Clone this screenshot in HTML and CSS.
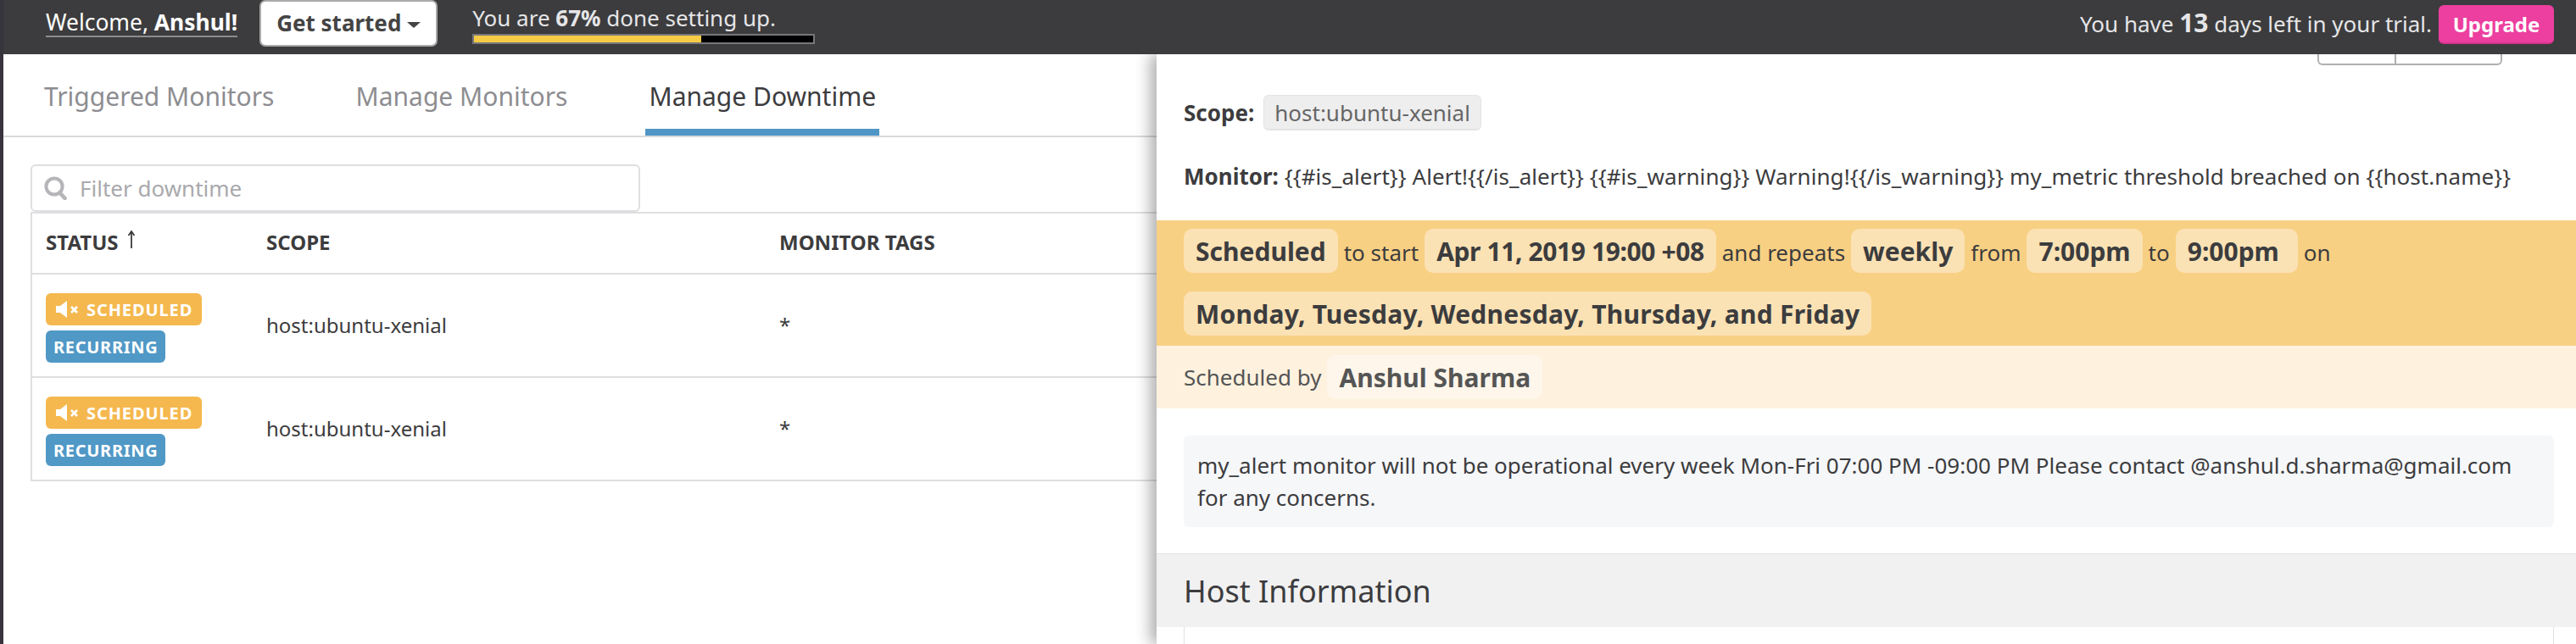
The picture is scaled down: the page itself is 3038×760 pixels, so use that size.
FILE: index.html
```html
<!DOCTYPE html>
<html lang="en">

<head>
    <meta charset="UTF-8">
    <title>Manage Downtime</title>
    <link rel="stylesheet" href="styles.css">
</head>

<body>
    <div class="topbar">
        <div class="topLeft">
            <a class="welcome">Welcome, <b>Anshul!</b></a>
            <button class="startBtn">Get started <span class="caret"></span></button>
            <div class="setup">
                <div class="setupText">You are <b>67%</b> done setting up.</div>
                <div class="progress"><div class="progressFill"></div></div>
            </div>
        </div>
        <div class="topRight">
            <span class="trial">You have <b>13</b> days left in your trial.</span>
            <button class="upgrade">Upgrade</button>
        </div>
    </div>

    <div class="page">
        <div class="tabs">
            <a class="tab">Triggered Monitors</a>
            <a class="tab">Manage Monitors</a>
            <a class="tab active">Manage Downtime</a>
        </div>

        <div class="filter">
            <svg class="searchIcon" viewBox="0 0 27 28" width="27" height="28">
                <circle cx="12" cy="12" r="9.6" fill="none" stroke="#b5b5b9" stroke-width="4" />
                <path d="M18.5 19.5 L24.5 26" fill="none" stroke="#b5b5b9" stroke-width="4.6" stroke-linecap="round" />
            </svg>
            <span>Filter downtime</span>
        </div>

        <div class="table">
            <div class="row head">
                <div class="colStatus">
                    <span>STATUS</span>
                    <svg class="sortArrow" viewBox="0 0 10 22" width="10" height="22">
                        <path d="M5 1 V21 M1.5 6 L5 1 L8.5 6" fill="none" stroke="#3c3c3e" stroke-width="1.8" />
                    </svg>
                </div>
                <div class="colScope">SCOPE</div>
                <div class="colTags">MONITOR TAGS</div>
            </div>
            <div class="row">
                <div class="colStatus">
                    <span class="badge scheduled">
                        <svg viewBox="0 0 26 20" width="26" height="20">
                            <path d="M0 6 H5 L13 0 V20 L5 14 H0 Z" fill="#fff" />
                            <path d="M18 7 L25 14 M25 7 L18 14" stroke="#fff" stroke-width="2.8" fill="none" />
                        </svg>
                        SCHEDULED
                    </span>
                    <span class="badge recurring">RECURRING</span>
                </div>
                <div class="colScope">host:ubuntu-xenial</div>
                <div class="colTags">*</div>
            </div>
            <div class="row">
                <div class="colStatus">
                    <span class="badge scheduled">
                        <svg viewBox="0 0 26 20" width="26" height="20">
                            <path d="M0 6 H5 L13 0 V20 L5 14 H0 Z" fill="#fff" />
                            <path d="M18 7 L25 14 M25 7 L18 14" stroke="#fff" stroke-width="2.8" fill="none" />
                        </svg>
                        SCHEDULED
                    </span>
                    <span class="badge recurring">RECURRING</span>
                </div>
                <div class="colScope">host:ubuntu-xenial</div>
                <div class="colTags">*</div>
            </div>
        </div>
    </div>

    <div class="panel">
        <div class="panelBtns"><span class="panelBtn first"></span><span class="panelBtn"></span></div>
        <div class="scopeLine"><b>Scope:</b> <span class="chip">host:ubuntu-xenial</span></div>
        <div class="monitorLine"><b>Monitor:</b> {{#is_alert}} Alert!{{/is_alert}} {{#is_warning}} Warning!{{/is_warning}} my_metric threshold breached on {{host.name}}</div>

        <div class="schedule">
            <div class="schedRow">
                <span class="pill">Scheduled</span> <span>to start</span>
                <span class="pill date">Apr 11, 2019 19:00 +08</span> <span>and repeats</span>
                <span class="pill">weekly</span> <span>from</span>
                <span class="pill">7:00pm</span> <span>to</span>
                <span class="pill">9:00pm&nbsp;</span> <span>on</span>
            </div>
            <div class="schedRow">
                <span class="pill days">Monday, Tuesday, Wednesday, Thursday, and Friday</span>
            </div>
        </div>
        <div class="schedBy">
            <span>Scheduled by</span> <span class="pill author">Anshul Sharma</span>
        </div>

        <div class="note">my_alert monitor will not be operational every week Mon-Fri 07:00 PM -09:00 PM Please contact @anshul.d.sharma@gmail.com<br>for any concerns.</div>

        <div class="hostHead">Host Information</div>
        <div class="hostBox"></div>
    </div>
</body>

</html>
```

FILE: styles.css
```css
* {
    box-sizing: border-box;
}

html,
body {
    height: 100%;
}

body {
    margin: 0;
    overflow: hidden;
    background: #fff;
    color: #3c3c3e;
    font-family: "Noto Sans", "Open Sans", sans-serif;
    font-size: 24px;
    border-left: 4px solid #38343e;
}

/* top bar */
.topbar {
    position: relative;
    z-index: 2;
    height: 64px;
    margin-left: -4px;
    padding: 0 26px 0 54px;
    background: #3c3c3e;
    color: #e6e6e8;
    display: flex;
    justify-content: space-between;
    align-items: flex-start;
}

.topLeft,
.topRight {
    display: flex;
    align-items: flex-start;
}

.welcome {
    margin-top: 9px;
    height: 35px;
    line-height: 35px;
    color: #fff;
    border-bottom: 2px solid #8c8c90;
    font-size: 26.4px;
}

.startBtn {
    width: 210px;
    height: 55px;
    margin-left: 26px;
    padding: 0 0 2px;
    background: #fff;
    border: 2px solid #aaa;
    border-radius: 7px;
    color: #444;
    font: 700 26px "Noto Sans", sans-serif;
}

.caret {
    display: inline-block;
    vertical-align: 4px;
    border: 8px solid transparent;
    border-top: 7px solid #444;
    border-bottom: 0;
}

.setup {
    margin-left: 41px;
}

.setupText {
    height: 40px;
    line-height: 42px;
    font-size: 26px;
}

.progress {
    width: 404px;
    height: 12px;
    background: #000;
    border: 2px solid #77777a;
}

.progressFill {
    width: 67%;
    height: 100%;
    background: #f6cb45;
}

.topRight {
    padding-top: 6px;
}

.trial {
    line-height: 42px;
    font-size: 26px;
}

.trial b {
    font-size: 30px;
}

.upgrade {
    width: 136px;
    height: 46px;
    margin-left: 8px;
    padding: 0;
    background: #ec3f9f;
    border: 0;
    border-bottom: 2px solid #d4338b;
    border-radius: 6px;
    color: #fff;
    font: 700 24px "Noto Sans", sans-serif;
}

/* left side */
.tabs {
    height: 98px;
    padding: 0 0 0 44px;
    display: flex;
    gap: 88px;
    border-bottom: 2px solid #d9d9dc;
}

.tab {
    height: 96px;
    padding: 29px 4px 0;
    color: #8d8d91;
    font-size: 30px;
    line-height: 42px;
}

.tab.active {
    color: #3c3c3e;
    border-bottom: 8px solid #4f96c6;
}

.filter {
    width: 719px;
    height: 56px;
    margin: 32px 0 0 32px;
    padding-left: 14px;
    display: flex;
    align-items: center;
    gap: 15px;
    border: 2px solid #dfdfe2;
    border-radius: 6px;
    color: #a9a9ad;
    font-size: 26px;
}

.table {
    margin-left: 32px;
    border-left: 2px solid #dfdfe2;
    border-top: 2px solid #dfdfe2;
}

.row {
    height: 122px;
    padding: 0 0 2px 16px;
    display: flex;
    align-items: center;
    border-bottom: 2px solid #dfdfe2;
    font-size: 24px;
}

.row.head {
    height: 72px;
    padding-bottom: 4px;
    font-weight: 700;
}

.colStatus {
    width: 260px;
    display: flex;
    flex-direction: column;
    align-items: flex-start;
    gap: 6px;
    padding-top: 8px;
}

.head .colStatus {
    flex-direction: row;
    align-items: center;
    gap: 10px;
    padding-top: 0;
}

.sortArrow {
    margin-top: -4px;
}

.colScope {
    width: 605px;
}

.badge {
    height: 38px;
    padding: 0 9px;
    display: inline-flex;
    align-items: center;
    border-radius: 6px;
    color: #fff;
    font-weight: 700;
    font-size: 20px;
    letter-spacing: 0.7px;
}

.badge svg {
    flex: none;
    margin: 0 10px 0 3px;
}

.scheduled {
    padding-right: 11px;
    background: #f5b84e;
    letter-spacing: 0.9px;
}

.recurring {
    background: #5098c6;
}

/* side panel over the list */
.panel {
    position: absolute;
    top: 64px;
    left: 1364px;
    right: 0;
    bottom: 0;
    overflow: hidden;
    background: #fff;
    box-shadow: -8px 0 16px rgba(0, 0, 0, 0.3);
}

.panelBtns {
    height: 13px;
    margin-left: 1369px;
    width: 218px;
    display: flex;
}

.panelBtn {
    width: 93px;
    border: 2px solid #b0b0b0;
    border-top: 0;
    border-radius: 0 0 0 6px;
}

.panelBtn + .panelBtn {
    flex: 1;
    border-left: 0;
    border-radius: 0 0 6px 0;
}

.scopeLine {
    height: 42px;
    margin: 35px 0 0 32px;
    display: flex;
    align-items: center;
    gap: 11px;
    font-size: 26px;
}

.chip {
    height: 42px;
    padding: 0 12px;
    display: flex;
    align-items: center;
    background: #eee;
    border: 1px solid #e4e4e4;
    border-bottom-width: 2px;
    border-radius: 6px;
    color: #666;
}

.monitorLine {
    height: 38px;
    margin: 35px 0 0 32px;
    line-height: 38px;
    font-size: 26px;
    letter-spacing: 0.07px;
    white-space: nowrap;
}

.monitorLine b {
    letter-spacing: 0;
}

.schedule {
    height: 148px;
    margin-top: 33px;
    padding: 10px 32px 0;
    background: #f8d083;
}

.schedRow {
    height: 52px;
    margin-bottom: 22px;
    display: flex;
    align-items: baseline;
    gap: 7px;
    font-size: 26px;
}

.pill {
    height: 52px;
    padding: 0 14px;
    display: flex;
    align-items: center;
    background: #fbe2b4;
    border-radius: 10px;
    font-weight: 700;
    font-size: 30px;
}

.pill.date {
    letter-spacing: -0.4px;
}

.pill.days {
    letter-spacing: 0.25px;
}

.schedBy {
    height: 74px;
    padding: 0 32px;
    display: flex;
    align-items: center;
    gap: 7px;
    background: #fef2df;
    font-size: 26px;
    color: #555;
}

.pill.author {
    background: #fef6ea;
    color: #555;
}

.note {
    width: 1616px;
    height: 108px;
    margin: 32px 0 0 32px;
    padding: 16px;
    background: #f6f7f9;
    border-radius: 6px;
    line-height: 38px;
    font-size: 26px;
    white-space: nowrap;
}

.hostHead {
    height: 87px;
    margin-top: 31px;
    padding-left: 32px;
    display: flex;
    align-items: center;
    background: #f1f1f1;
    border-top: 1px solid #e2e2e2;
    font-size: 36px;
}

.hostBox {
    width: 1616px;
    height: 40px;
    margin-left: 32px;
    border-left: 1px solid #e2e2e2;
    border-right: 1px solid #e2e2e2;
}
```
